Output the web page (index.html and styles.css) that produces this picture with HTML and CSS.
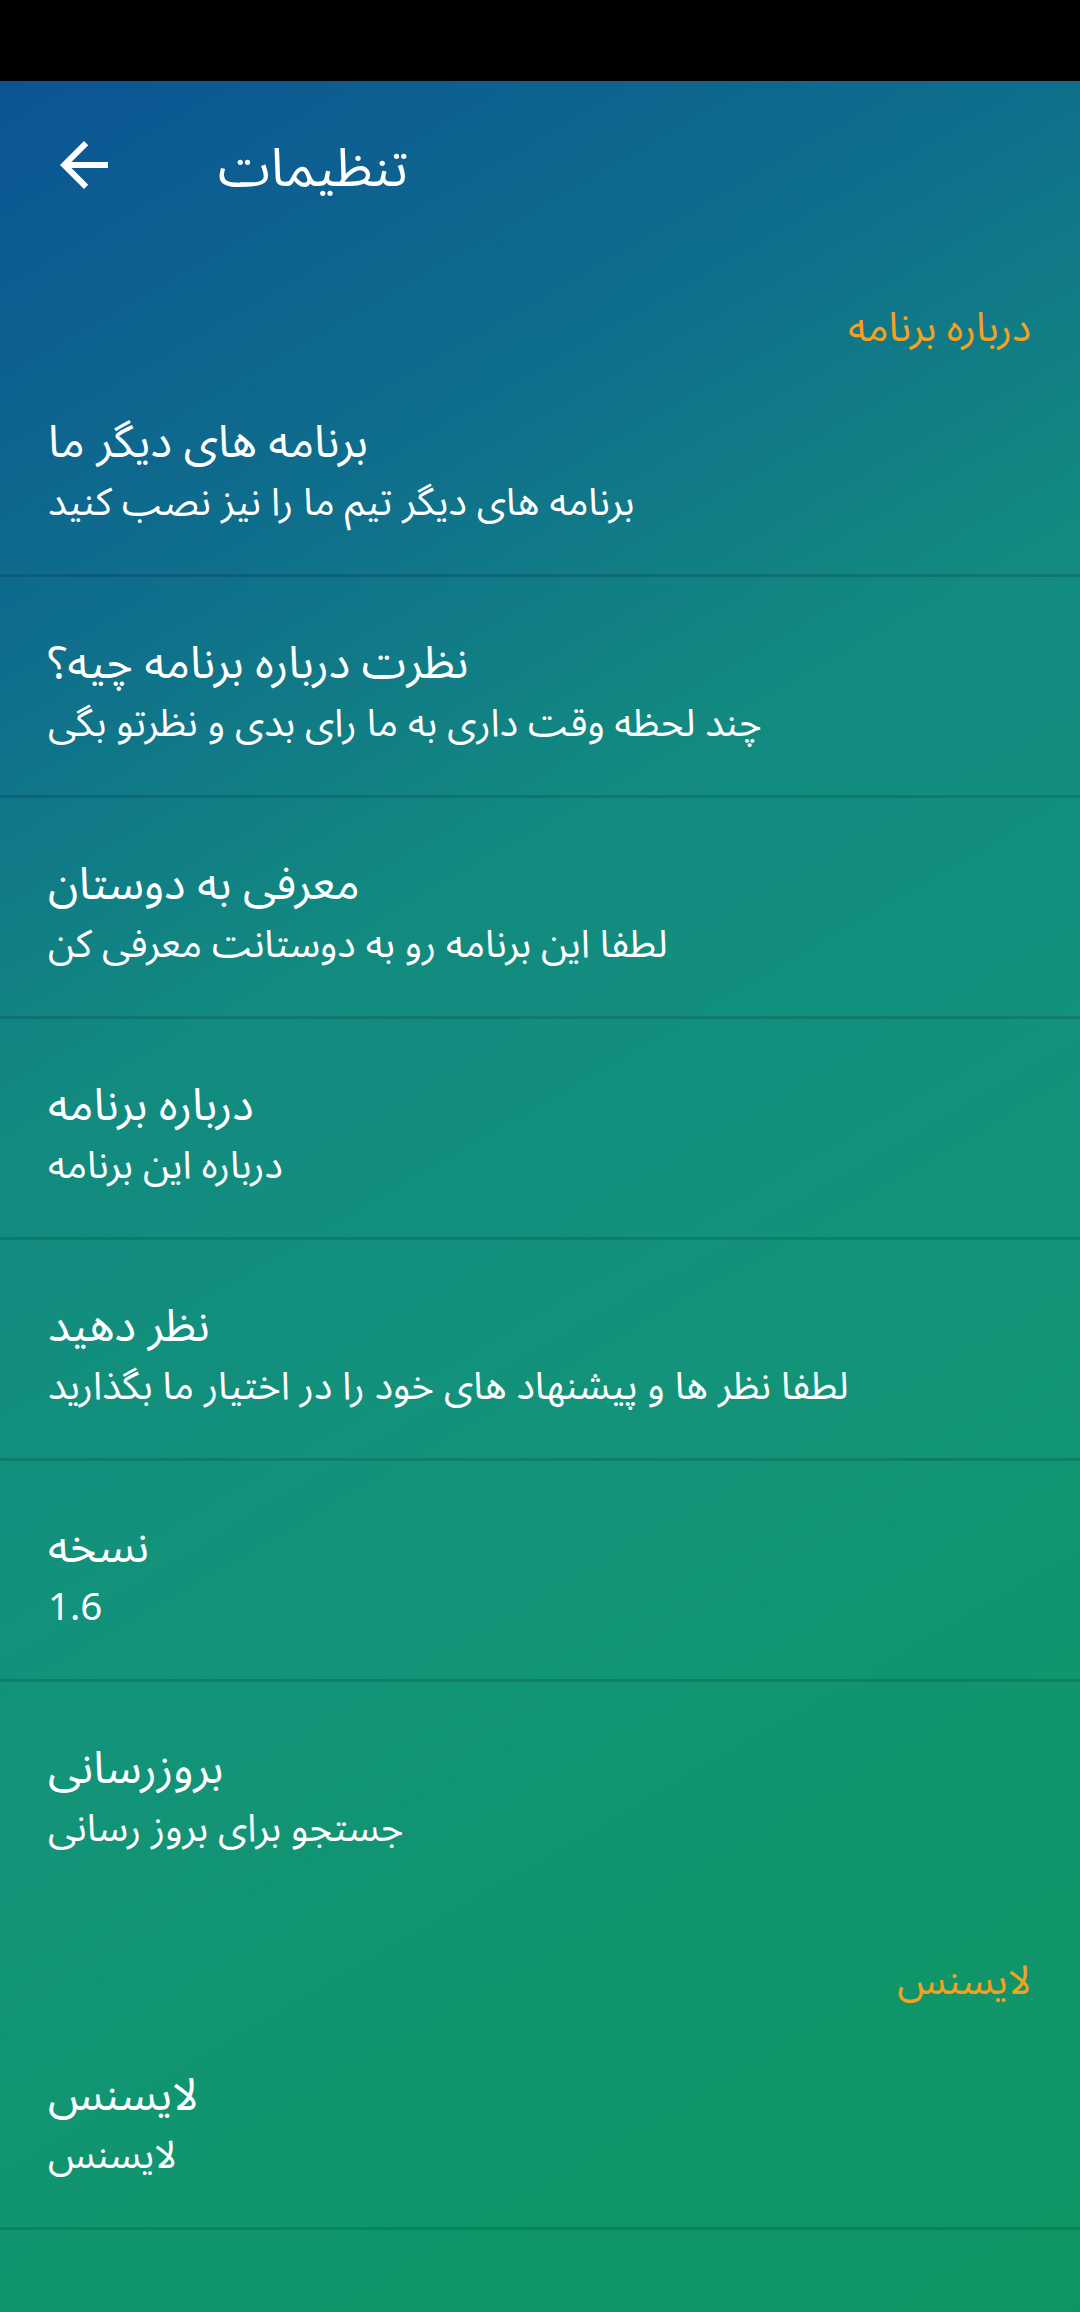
FILE: index.html
```html
<!DOCTYPE html>
<html lang="fa">
<head>
<meta charset="utf-8">
<title>تنظیمات</title>
<link rel="stylesheet" href="styles.css">
</head>
<body>
<div class="statusbar"></div>
<div class="app">
  <header class="toolbar">
    <span class="nav-icon">
      <svg viewBox="0 0 24 24" width="72" height="72"><path fill="#fff" d="M20 11H7.83l5.59-5.59L12 4l-8 8 8 8 1.41-1.41L7.83 13H20v-2z"/></svg>
    </span>
    <h1 class="toolbar-title" dir="rtl">تنظیمات</h1>
  </header>

  <div class="category first" dir="rtl">درباره برنامه</div>
  <div class="pref">
    <div class="pref-title" dir="rtl">برنامه های دیگر ما</div>
    <div class="pref-summary" dir="rtl">برنامه های دیگر تیم ما را نیز نصب کنید</div>
  </div>
  <div class="pref">
    <div class="pref-title" dir="rtl">نظرت درباره برنامه چیه؟</div>
    <div class="pref-summary" dir="rtl">چند لحظه وقت داری به ما رای بدی و نظرتو بگی</div>
  </div>
  <div class="pref">
    <div class="pref-title" dir="rtl">معرفی به دوستان</div>
    <div class="pref-summary" dir="rtl">لطفا این برنامه رو به دوستانت معرفی کن</div>
  </div>
  <div class="pref">
    <div class="pref-title" dir="rtl">درباره برنامه</div>
    <div class="pref-summary" dir="rtl">درباره این برنامه</div>
  </div>
  <div class="pref">
    <div class="pref-title" dir="rtl">نظر دهید</div>
    <div class="pref-summary" dir="rtl">لطفا نظر ها و پیشنهاد های خود را در اختیار ما بگذارید</div>
  </div>
  <div class="pref">
    <div class="pref-title" dir="rtl">نسخه</div>
    <div class="pref-summary" dir="ltr">1.6</div>
  </div>
  <div class="pref last">
    <div class="pref-title" dir="rtl">بروزرسانی</div>
    <div class="pref-summary" dir="rtl">جستجو برای بروز رسانی</div>
  </div>

  <div class="category" dir="rtl">لایسنس</div>
  <div class="pref">
    <div class="pref-title" dir="rtl">لایسنس</div>
    <div class="pref-summary" dir="rtl">لایسنس</div>
  </div>
</div>
</body>
</html>
```

FILE: styles.css
```css
html, body {
  margin: 0;
  padding: 0;
}
body {
  width: 1080px;
  height: 2312px;
  overflow: hidden;
  background: #000;
  font-family: "Noto Sans Arabic", "Vazirmatn", "DejaVu Sans", sans-serif;
  color: #fff;
}
.statusbar {
  height: 81px;
  background: #000;
}
.app {
  height: 2231px;
  background: linear-gradient(150deg, #0b5494 0%, #0f6e8c 21%, #128a80 37%, #13937a 59%, #10956e 78%, #0f9563 100%);
}
.toolbar {
  height: 154px;
  box-sizing: border-box;
  padding-top: 14px;
  padding-left: 48px;
  display: flex;
  align-items: center;
}
.nav-icon {
  width: 72px;
  height: 72px;
  display: block;
}
.nav-icon svg {
  display: block;
}
.toolbar-title {
  margin: 8px 0 0 98px;
  font-size: 53px;
  font-weight: normal;
  line-height: 72px;
  text-align: left;
}
.category {
  height: 106px;
  box-sizing: border-box;
  padding: 52px 49px 0 49px;
  text-align: right;
  color: #f4a11d;
  font-size: 40px;
  line-height: 54px;
}
.category.first {
  height: 121px;
  padding-top: 67px;
}
.pref {
  height: 221px;
  box-sizing: border-box;
  border-bottom: 3px solid rgba(0, 0, 0, 0.14);
  padding: 56px 48px 0 48px;
}
.pref.last {
  border-bottom: none;
}
.pref-title {
  font-size: 45px;
  line-height: 62px;
  text-align: left;
}
.pref-summary {
  font-size: 38.5px;
  line-height: 58px;
  text-align: left;
}
```
